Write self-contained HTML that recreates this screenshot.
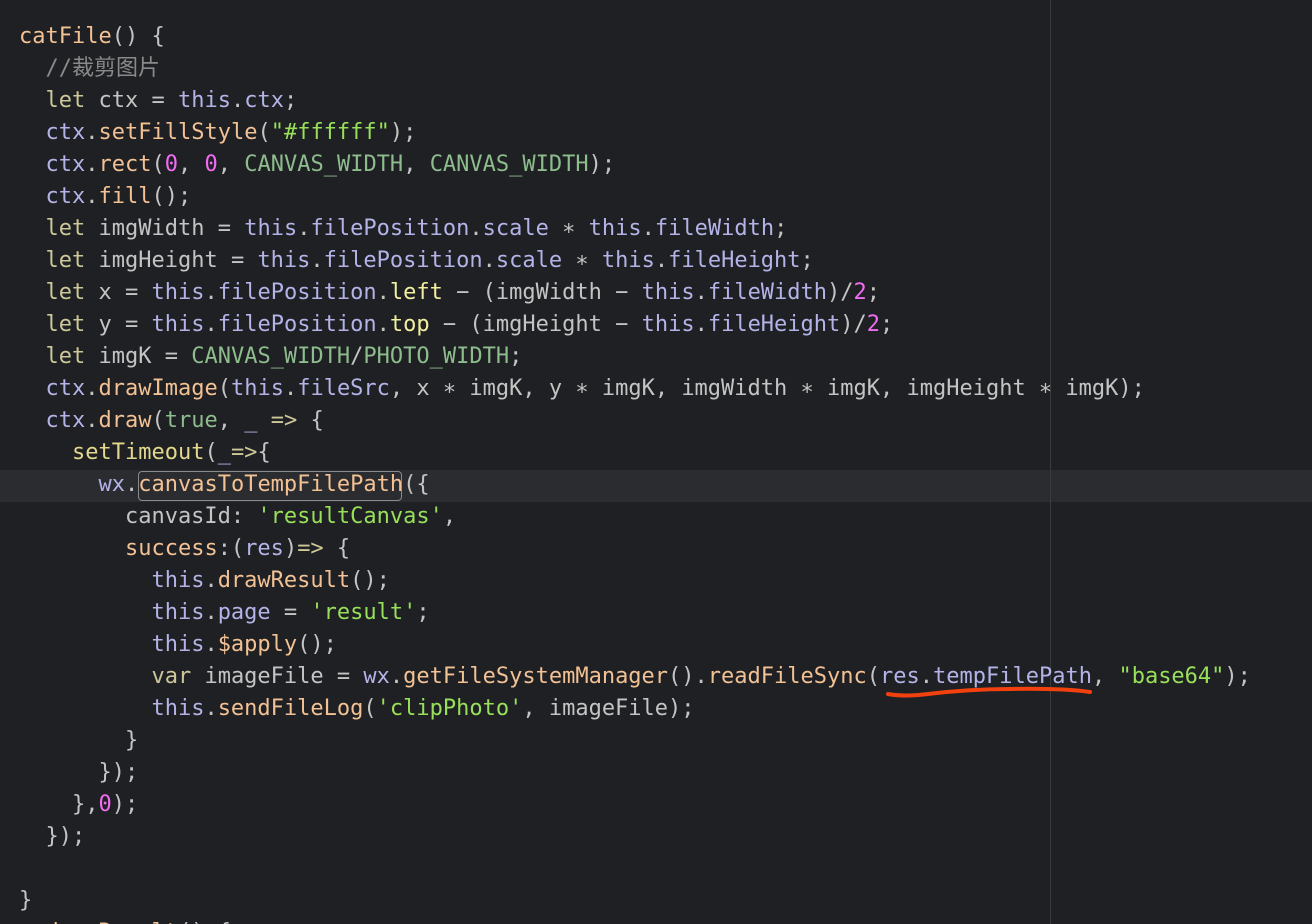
<!DOCTYPE html>
<html><head><meta charset="utf-8"><style>
html,body{margin:0;padding:0;background:#1f2023;width:1312px;height:924px;overflow:hidden;position:relative}
pre{margin:0;position:absolute;left:19px;top:21px;font-family:"DejaVu Sans Mono","Liberation Mono","Noto Sans CJK SC",monospace;font-size:22px;line-height:32px;color:#c4c4c4;white-space:pre}
.k{color:#cdc79a}.t{color:#b3b3e8}.m{color:#f2c194}.s{color:#98e05a}.n{color:#f06cf0}.c{color:#8dbc8d}.cm{color:#8a8a8a}.y{color:#e2d88e}.ly{color:#f3eea0}
.hl{position:absolute;left:0;top:470px;width:1312px;height:32px;background:#2b2c30}
.vl{position:absolute;left:1050px;top:0;width:1px;height:924px;background:#3a3b3e}
.box{position:absolute;left:138px;top:471px;width:262px;height:28px;border:1.5px solid #8a8a8a;border-radius:4px}
</style></head><body>
<div class="hl"></div><div class="vl"></div><div class="box"></div>
<pre><span class="m">catFile</span>() {
  <span class="cm">//裁剪图片</span>
  <span class="k">let</span> ctx = <span class="t">this</span>.<span class="t">ctx</span>;
  <span class="t">ctx</span>.<span class="m">setFillStyle</span>(<span class="s">"#ffffff"</span>);
  <span class="t">ctx</span>.<span class="m">rect</span>(<span class="n">0</span>, <span class="n">0</span>, <span class="c">CANVAS_WIDTH</span>, <span class="c">CANVAS_WIDTH</span>);
  <span class="t">ctx</span>.<span class="m">fill</span>();
  <span class="k">let</span> imgWidth = <span class="t">this</span>.<span class="t">filePosition</span>.<span class="t">scale</span> ∗ <span class="t">this</span>.<span class="t">fileWidth</span>;
  <span class="k">let</span> imgHeight = <span class="t">this</span>.<span class="t">filePosition</span>.<span class="t">scale</span> ∗ <span class="t">this</span>.<span class="t">fileHeight</span>;
  <span class="k">let</span> x = <span class="t">this</span>.<span class="t">filePosition</span>.<span class="ly">left</span> − (imgWidth − <span class="t">this</span>.<span class="t">fileWidth</span>)/<span class="n">2</span>;
  <span class="k">let</span> y = <span class="t">this</span>.<span class="t">filePosition</span>.<span class="ly">top</span> − (imgHeight − <span class="t">this</span>.<span class="t">fileHeight</span>)/<span class="n">2</span>;
  <span class="k">let</span> imgK = <span class="c">CANVAS_WIDTH</span>/<span class="c">PHOTO_WIDTH</span>;
  <span class="t">ctx</span>.<span class="m">drawImage</span>(<span class="t">this</span>.<span class="t">fileSrc</span>, x ∗ imgK, y ∗ imgK, imgWidth ∗ imgK, imgHeight ∗ imgK);
  <span class="t">ctx</span>.<span class="m">draw</span>(<span class="c">true</span>, <span class="t">_</span> <span class="k">=&gt;</span> {
    <span class="y">setTimeout</span>(<span class="t">_</span><span class="k">=&gt;</span>{
      <span class="t">wx</span>.<span class="m">canvasToTempFilePath</span>({
        canvasId: <span class="s">'resultCanvas'</span>,
        <span class="m">success</span>:(<span class="t">res</span>)<span class="k">=&gt;</span> {
          <span class="t">this</span>.<span class="m">drawResult</span>();
          <span class="t">this</span>.<span class="t">page</span> = <span class="s">'result'</span>;
          <span class="t">this</span>.<span class="m">$apply</span>();
          <span class="k">var</span> imageFile = <span class="t">wx</span>.<span class="m">getFileSystemManager</span>().<span class="m">readFileSync</span>(<span class="t">res</span>.<span class="t">tempFilePath</span>, <span class="s">"base64"</span>);
          <span class="t">this</span>.<span class="m">sendFileLog</span>(<span class="s">'clipPhoto'</span>, imageFile);
        }
      });
    },<span class="n">0</span>);
  });

}
  <span class="m">drawResult</span>() {</pre>
<svg style="position:absolute;left:0;top:0" width="1312" height="924"><path d="M888 694 Q905 697 928 694 Q970 689 1010 689 Q1060 688 1090 692" stroke="#f2400f" stroke-width="4" fill="none" stroke-linecap="round"/></svg>
</body></html>
